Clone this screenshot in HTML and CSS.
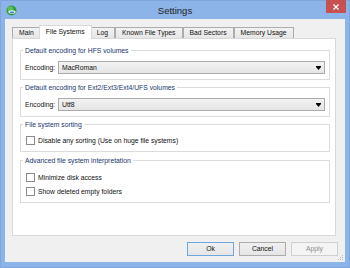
FILE: index.html
```html
<!DOCTYPE html>
<html lang="en">
<head>
    <meta charset="UTF-8">
    <meta name="viewport" content="width=device-width, initial-scale=1.0">
    <title>Settings</title>
    <link rel="stylesheet" href="styles.css">
</head>
<body>
    <div class="window">
        <!-- Title bar -->
        <div class="titlebar">
            <svg class="app-icon" width="11" height="11" viewBox="0 0 11 11">
                <circle cx="5.5" cy="5.5" r="5" fill="#2f9a3c"/>
                <circle cx="4.5" cy="4.2" r="3" fill="#5cc05a"/>
                <ellipse cx="6" cy="7" rx="3.6" ry="1.8" fill="#e8eef2"/>
                <ellipse cx="6" cy="7.3" rx="2.2" ry="0.9" fill="#3d78c2"/>
            </svg>
            <span class="title">Settings</span>
            <div class="close-button">
                <svg width="6" height="6" viewBox="0 0 6 6">
                    <path d="M0.5 0.5 L5.5 5.5 M5.5 0.5 L0.5 5.5" stroke="#fff" stroke-width="1.3"/>
                </svg>
            </div>
        </div>

        <div class="client">
            <!-- Tabs -->
            <div class="tabs">
                <div class="tab">Main</div>
                <div class="tab active">File Systems</div>
                <div class="tab">Log</div>
                <div class="tab">Known File Types</div>
                <div class="tab">Bad Sectors</div>
                <div class="tab">Memory Usage</div>
            </div>

            <div class="panel">
                <fieldset class="group">
                    <legend>Default encoding for HFS volumes</legend>
                    <div class="field-row">
                        <span class="field-label">Encoding:</span>
                        <div class="combo">
                            <span>MacRoman</span>
                            <svg width="5" height="4" viewBox="0 0 5 4"><path d="M0 0 H5 V1 L2.5 4 L0 1 Z" fill="#000"/></svg>
                        </div>
                    </div>
                </fieldset>

                <fieldset class="group">
                    <legend>Default encoding for Ext2/Ext3/Ext4/UFS volumes</legend>
                    <div class="field-row">
                        <span class="field-label">Encoding:</span>
                        <div class="combo">
                            <span>Utf8</span>
                            <svg width="5" height="4" viewBox="0 0 5 4"><path d="M0 0 H5 V1 L2.5 4 L0 1 Z" fill="#000"/></svg>
                        </div>
                    </div>
                </fieldset>

                <fieldset class="group group-checks">
                    <legend>File system sorting</legend>
                    <label class="check-row"><span class="checkbox"></span>Disable any sorting (Use on huge file systems)</label>
                </fieldset>

                <fieldset class="group group-checks group-last">
                    <legend>Advanced file system interpretation</legend>
                    <label class="check-row"><span class="checkbox"></span>Minimize disk access</label>
                    <label class="check-row"><span class="checkbox"></span>Show deleted empty folders</label>
                </fieldset>
            </div>

            <!-- Dialog buttons -->
            <div class="buttons">
                <div class="button default">Ok</div>
                <div class="button">Cancel</div>
                <div class="button disabled">Apply</div>
            </div>

            <svg class="grip" width="6" height="6" viewBox="0 0 6 6">
                <rect x="4" y="0" width="1" height="1" fill="#b8b8b8"/>
                <rect x="2" y="2" width="1" height="1" fill="#b8b8b8"/>
                <rect x="4" y="2" width="1" height="1" fill="#b8b8b8"/>
                <rect x="0" y="4" width="1" height="1" fill="#b8b8b8"/>
                <rect x="2" y="4" width="1" height="1" fill="#b8b8b8"/>
                <rect x="4" y="4" width="1" height="1" fill="#b8b8b8"/>
            </svg>
        </div>
    </div>
</body>
</html>
```

FILE: styles.css
```css
/* Window frame */
body {
    margin: 0;
    font-family: "Liberation Sans", Arial, sans-serif;
}

.window {
    width: 350px;
    height: 268px;
    box-sizing: border-box;
    background-color: #8cb4e8;
    border: 1px solid #7ea6dc;
    display: flex;
    flex-direction: column;
}

.titlebar {
    height: 18px;
    display: grid;
    grid-template-columns: 1fr auto 1fr;
    align-items: start;
}

.app-icon {
    margin: 4px 0 0 5px;
}

.title {
    font-size: 9.5px;
    line-height: 20px;
    color: #1e1e1e;
}

.close-button {
    justify-self: end;
    width: 20px;
    height: 13px;
    margin-right: 3px;
    margin-top: -1px;
    background-color: #c75050;
    display: flex;
    align-items: center;
    justify-content: center;
}

/* Client area */
.client {
    position: relative;
    margin: 0 4px 5px 4px;
    height: 243px;
    box-sizing: border-box;
    background-color: #f0f0f0;
    padding: 6px 9px 6px 7px;
    display: flex;
    flex-direction: column;
}

.tabs {
    display: flex;
    align-items: flex-end;
    height: 13px;
}

.tab {
    height: 11px;
    box-sizing: border-box;
    border: 1px solid #acacac;
    border-bottom: none;
    background: linear-gradient(#f2f2f2, #e6e6e6);
    padding: 0 6px;
    font-size: 6.8px;
    line-height: 10px;
    color: #111;
    white-space: nowrap;
}

.tab.active {
    position: relative;
    z-index: 1;
    height: 14px;
    margin: 0 -2px -1px -2px;
    background: #fff;
    border-color: #d9d9d9;
    line-height: 12px;
}

.panel {
    height: 198px;
    box-sizing: border-box;
    background-color: #fff;
    border: 1px solid #d9d9d9;
    padding: 7px 5px 0 7px;
    display: flex;
    flex-direction: column;
    gap: 3px;
}

/* Group boxes */
.group {
    margin: 0;
    min-width: 0;
    border: 1px solid #dcdcdc;
    padding: 6px 4px 5px 4px;
}

.group legend {
    font-size: 6.8px;
    line-height: 9px;
    padding: 0 2px;
    margin-left: -2px;
    color: #22366f;
}

.group-checks {
    padding-bottom: 6px;
}

.group-last {
    margin-top: 1px;
    padding-top: 7px;
    display: flex;
    flex-direction: column;
    gap: 4px;
}

.field-row {
    display: flex;
    align-items: center;
    font-size: 6.8px;
    color: #111;
}

.field-label {
    width: 33px;
    flex-shrink: 0;
}

.combo {
    flex: 1;
    height: 13px;
    box-sizing: border-box;
    border: 1px solid #acacac;
    background: linear-gradient(#f3f3f3, #e5e5e5);
    padding: 0 3px 0 3px;
    display: flex;
    align-items: center;
    justify-content: space-between;
}

.check-row {
    display: flex;
    align-items: center;
    gap: 3px;
    height: 10px;
    font-size: 6.8px;
    color: #111;
    white-space: nowrap;
}

.checkbox {
    width: 9px;
    height: 9px;
    box-sizing: border-box;
    margin-left: 1px;
    border: 1px solid #8a8a8a;
    background-color: #fff;
}

/* Dialog buttons */
.buttons {
    display: flex;
    justify-content: flex-end;
    gap: 5px;
    margin: 6px -2px 0 0;
}

.button {
    width: 47px;
    height: 14px;
    box-sizing: border-box;
    border: 1px solid #acacac;
    background: linear-gradient(#f0f0f0, #e5e5e5);
    font-size: 6.8px;
    line-height: 12px;
    text-align: center;
    color: #111;
}

.button.default {
    border-color: #6ea6df;
}

.button.disabled {
    border-color: #d0d0d0;
    background: #f4f4f4;
    color: #8c8c8c;
}

.grip {
    position: absolute;
    right: 1px;
    bottom: 1px;
}
```
